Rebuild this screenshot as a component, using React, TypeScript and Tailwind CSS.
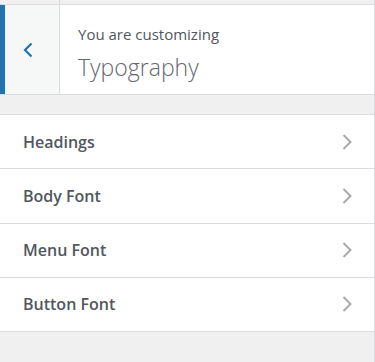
import React from 'react';

const sections = ['Headings', 'Body Font', 'Menu Font', 'Button Font'];

const ChevronRight = () => (
  <svg width="10" height="16" viewBox="0 0 10 16" fill="none" className="text-[#a7aaad]">
    <path d="M1.5 1l7 7-7 7" stroke="currentColor" strokeWidth="2" />
  </svg>
);

export default function App() {
  return (
    <div
      className="w-[375px] h-[362px] bg-[#f0f0f1] border-r border-[#dcdcde] overflow-hidden text-[#50575e]"
      style={{ fontFamily: '"Open Sans", "Noto Sans", sans-serif' }}
    >
      {/* strip above the header */}
      <div className="flex h-[4px]">
        <div className="w-[60px] border-r border-[#dcdcde]" />
      </div>

      {/* Section meta */}
      <div className="flex h-[91px] bg-white border-y border-[#dcdcde]">
        <button className="w-[60px] flex items-center pl-[18px] bg-[#f6f7f7] border-l-[5px] border-[#2271b1] border-r border-r-[#dcdcde] text-[#2271b1]">
          <svg width="10" height="16" viewBox="0 0 10 16" fill="none">
            <path d="M8.5 1.5L2 8l6.5 6.5" stroke="currentColor" strokeWidth="2.2" />
          </svg>
        </button>
        <div className="pl-[18px] pt-[19px]">
          <div className="text-[15px] leading-[20px]">You are customizing</div>
          <div className="text-[23px] leading-[34px] font-extralight text-[#646970] mt-[6px]">Typography</div>
        </div>
      </div>

      {/* Sections */}
      <ul className="mt-[19px] bg-white border-t border-[#dcdcde]">
        {sections.map((s) => (
          <li
            key={s}
            className="flex items-center justify-between h-[54.25px] pl-[23px] pr-[22px] border-b border-[#dcdcde]"
          >
            <span className="text-[16px] font-semibold">{s}</span>
            <ChevronRight />
          </li>
        ))}
      </ul>
    </div>
  );
}
